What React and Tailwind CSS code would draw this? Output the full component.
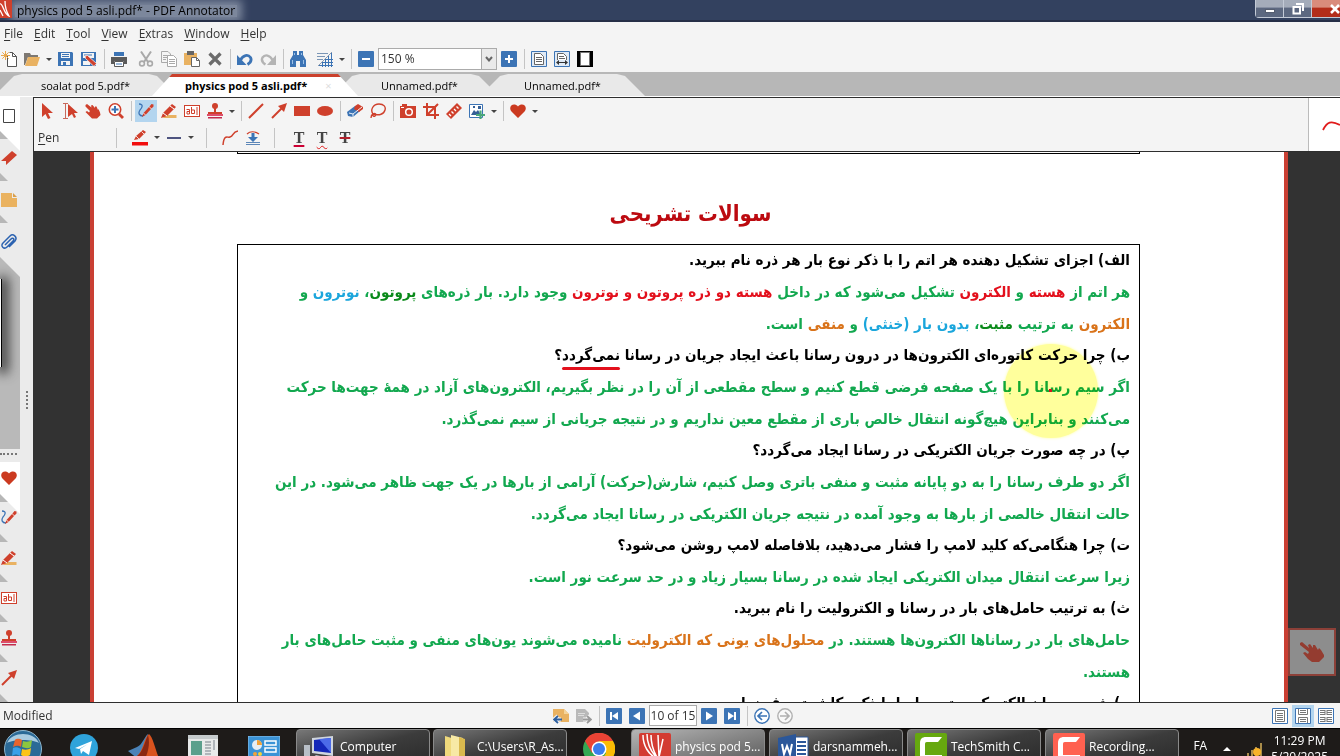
import { useState } from "react";

const RED = "#cf402c";
const BLUE = "#3c74b5";
const GREY = "#a9a9a9";

const icons = {
  newFile: (
    <>
      <path d="M6.5 4V15.5H15.5V5.5L11.5 1.5H8.5M11.5 1.5V5.5H15.5" fill="#fff" stroke="#555" />
      <path d="M4.5 0V9M0 4.5H9M1.3 1.3L7.7 7.7M7.7 1.3L1.3 7.7" stroke="#e9a74b" />
    </>
  ),
  open: (
    <>
      <path d="M0 14V2H6L7 4H14V6H4L1 14Z" fill="#7d7872" />
      <path d="M4 6H16L13 15H1Z" fill="#e9b262" />
    </>
  ),
  save: (
    <>
      <path d="M0 1H14L15 2V15H0Z" fill={BLUE} />
      <path d="M3 2H12V7H3ZM3 10H12V14H3Z" fill="#f4f4f4" />
      <path d="M4 3.5H11M4 5.5H11" stroke={BLUE} />
      <path d="M5 11H8V14H5Z" fill={BLUE} />
    </>
  ),
  saveEdit: (
    <>
      <path d="M0 1H15V15H0Z" fill={BLUE} />
      <path d="M2 2H13V7H2ZM2 10H9V14H2Z" fill="#f4f4f4" />
      <path d="M3 4H11" stroke={BLUE} />
      <path d="M4 5L6.5 4.5L15.5 12.5L13 15.5L4.5 7.5Z" fill={RED} stroke="#fff" strokeWidth=".7" />
    </>
  ),
  print: (
    <>
      <path d="M3 1H13V5H3Z" fill={BLUE} />
      <path d="M0 6H16V13H13V10H3V13H0Z" fill="#5a5a5a" />
      <path d="M3.5 10.5H12.5V15.5H3.5Z" fill="#fff" stroke="#5a5a5a" />
      <path d="M5 13H11" stroke={BLUE} />
    </>
  ),
  cut: (
    <>
      <path d="M3 0.5L10 11M13 0.5L6 11" stroke={GREY} strokeWidth="2" />
      <circle cx="4" cy="12.5" r="2.4" fill="none" stroke={GREY} strokeWidth="1.6" />
      <circle cx="12" cy="12.5" r="2.4" fill="none" stroke={GREY} strokeWidth="1.6" />
    </>
  ),
  copy: (
    <>
      <path d="M.5 .5H7L9.5 3V11.5H.5Z" fill="#f4f4f4" stroke={GREY} />
      <path d="M2 4.5H7M2 6.5H7M2 8.5H5" stroke={GREY} />
      <path d="M6.5 4.5H12.5L15.5 7.5V15.5H6.5Z" fill="#fff" stroke={GREY} />
      <path d="M8 8.5H14M8 10.5H14M8 12.5H14" stroke={GREY} />
    </>
  ),
  paste: (
    <>
      <path d="M0 2H13V14H0Z" fill="#e9b262" />
      <path d="M3 0H10V4H3Z" fill="#666" />
      <path d="M7.5 6.5H12.5L15.5 9.5V15.5H7.5Z" fill="#fff" stroke="#666" />
      <path d="M12.5 6.5V9.5H15.5" fill="none" stroke="#666" />
    </>
  ),
  remove: <path d="M2.5 2.5L13.5 13.5M13.5 2.5L2.5 13.5" stroke="#6b6b6b" strokeWidth="3.2" />,
  undo: (
    <>
      <path d="M3.500 9C6 4 11 3 13.500 6.500C15 9.500 13 12 10.500 13.500" fill="none" stroke={BLUE} strokeWidth="2.800" />
      <path d="M0 4V14H9.500Z" fill={BLUE} />
    </>
  ),
  redo: (
    <>
      <path d="M12.500 9C10 4 5 3 2.500 6.500C1 9.500 3 12 5.500 13.500" fill="none" stroke="#b4b4b4" strokeWidth="2.400" />
      <path d="M16 4V14H7Z" fill="#b4b4b4" />
    </>
  ),
  find: (
    <>
      <path d="M3 0H7V4H9V0H13V4L16 9V16H10V10H6V16H0V9L3 4Z" fill={BLUE} />
      <path d="M4.500 2V4M11.500 2V4M2.500 9V13M13.500 9V13" stroke="#9cc0e6" />
    </>
  ),
  grid: (
    <>
      <path d="M0 2.500H11M0 5.500H8M0 8.500H6" stroke="#7a95b5" />
      <path d="M1 15L15 1" stroke="#8b9bb0" />
      <path d="M2 14.500H16M5 11.500H16M8 8.500H16M5.500 11V16M8.500 8V16M11.500 5V16M14.500 2V16" stroke={BLUE} />
    </>
  ),
  minus: (
    <>
      <rect width="16" height="16" rx="1" fill={BLUE} />
      <path d="M4 8H12" stroke="#fff" strokeWidth="2" />
    </>
  ),
  plus: (
    <>
      <rect width="16" height="16" rx="1" fill={BLUE} />
      <path d="M4 8H12M8 4V12" stroke="#fff" strokeWidth="2" />
    </>
  ),
  fitPage: (
    <>
      <path d="M.5 .5H15.500V15.500H.5Z" fill="#dfeaf6" stroke={BLUE} />
      <path d="M3.500 2.500H9.500L12.500 5.500V13.500H3.500Z" fill="#fff" stroke="#666" />
      <path d="M5 6.500H11M5 8.500H11M5 10.500H11" stroke="#666" />
    </>
  ),
  fitWidth: (
    <>
      <path d="M.5 .5H15.500V15.500H.5Z" fill="#dfeaf6" stroke={BLUE} />
      <path d="M3.500 9V2.500H9.500L12.500 5.500V9" fill="#fff" stroke="#666" />
      <path d="M5 5.500H10M5 7.500H11" stroke="#666" />
      <path d="M2 11.500L5 9V14ZM14 11.500L11 9V14Z" fill="#333" />
      <path d="M4 11.500H12" stroke="#333" />
    </>
  ),
  fullscreen: (
    <>
      <path d="M0 0H16V16H0Z" fill="#000" />
      <path d="M3.500 1.500H12.500V14.500H3.500Z" fill="#fff" stroke="#777" />
    </>
  ),
  select: <path d="M3 0L14 10H9L11.500 15L9 16L6.500 11L3 14Z" fill={RED} />,
  selectText: (
    <>
      <path d="M1 .5H6M1 15.500H6M3.500 .5V15.500" stroke="#c7685a" />
      <path d="M6 1L16 10H12L14 14L12 15L10 11L6 14Z" fill={RED} />
    </>
  ),
  hand: (
    <path
      d="M.5 2L2 1L6.500 4.500L6 2.500L7.500 2L10 5L10 3.500L11.500 3.500L13 7L13.500 6L15 9.500L15.500 12L12 15.500H7L3.500 12L.5 9L2 8L4 9.500L5 8L.5 3.500Z"
      fill={RED}
    />
  ),
  zoom: (
    <>
      <circle cx="7" cy="6.500" r="5.700" fill="#fff" stroke={RED} strokeWidth="1.600" />
      <path d="M11 11L15 15" stroke={RED} strokeWidth="2.800" />
      <path d="M3.500 6.500H10.500M7 3V10" stroke={BLUE} strokeWidth="2" />
    </>
  ),
  pen: (
    <>
      <path d="M1 1C6 1 4 5 2 7C0 10 1 13 5 13" fill="none" stroke={BLUE} strokeWidth="1.300" />
      <path d="M4 14L5.500 10L11.500 3.500L13.500 1L15.500 1.500L15.500 3.500L13.500 5.500L7.500 12Z" fill={RED} />
      <path d="M11 3.500L13.500 6M5.500 10L7.500 12" stroke="#fff" strokeWidth=".8" />
    </>
  ),
  marker: (
    <>
      <path d="M4 12H15.500V15H2Z" fill="#e9b262" />
      <path d="M0 15L2 10L11 1L15 4L6 13Z" fill={RED} />
      <path d="M9 3L13 6M2 10L6 13" stroke="#fff" />
    </>
  ),
  textBox: (
    <>
      <rect x=".5" y="2.500" width="15" height="11" fill="#fff" stroke={RED} />
      <path d="M2.500 6.500H5.500V11M5.500 8.500H3V11H5.500M7.500 4V10.500H10.500V7H7.500M13 4V12" fill="none" stroke={RED} />
    </>
  ),
  stamp: (
    <>
      <circle cx="8" cy="3" r="3" fill={RED} />
      <path d="M7 5H9V9H15V11H1V9H7Z" fill={RED} />
      <path d="M0 11H16V13H0Z" fill="#dd4d6a" />
      <path d="M1 14H15V15.500H1Z" fill="#c22c4c" />
    </>
  ),
  line: <path d="M1 15L15 1" stroke={RED} strokeWidth="2" />,
  arrow: (
    <>
      <path d="M1 15L11 5" stroke={RED} strokeWidth="2" />
      <path d="M16 0L13 9L7 3Z" fill={RED} />
    </>
  ),
  rect: <path d="M0 3H16V13H0Z" fill={RED} />,
  ellipse: <ellipse cx="8" cy="8" rx="8" ry="5" fill={RED} />,
  eraser: (
    <>
      <path d="M0 9L8 3L13 8L6 14L1 13Z" fill={BLUE} />
      <path d="M8 3L11 1L16 4V6L12 9L7 6Z" fill={RED} />
      <path d="M2 10L6 11L15 4M6 11V14" fill="none" stroke="#fff" strokeWidth=".9" />
    </>
  ),
  lasso: (
    <path
      d="M3 11C0 7 3 1 9 1C14 1 16 4 15 7C14 11 9 13 4 11C2 12 3 14 5 13C7 11 5 10 3 11C1 12 1 14 1 15"
      fill="none"
      stroke={RED}
      strokeWidth="1.400"
    />
  ),
  camera: (
    <>
      <path d="M0 3H2V1H7V3H16V15H0Z" fill={RED} />
      <circle cx="9" cy="9" r="3.300" fill="none" stroke="#fff" strokeWidth="1.500" />
      <path d="M1 4.500H4" stroke="#fff" />
    </>
  ),
  crop: <path d="M4 0V12H16M0 4H12V16M4 12L15 1" fill="none" stroke={RED} strokeWidth="2" />,
  ruler: (
    <>
      <path d="M0 11L11 0L16 5L5 16Z" fill={RED} />
      <path d="M3 11L5 13M5.500 8.500L7.500 10.500M8 6L10 8M10.500 3.500L12.500 5.500" stroke="#fff" strokeWidth="1.300" />
    </>
  ),
  addImage: (
    <>
      <path d="M.5 1.500H13.500V14.500H.5Z" fill="#fff" stroke={BLUE} />
      <path d="M2 12L5 7L7 9L9 7L12 12ZM4 3H6V5H4ZM9 3H12V6H9Z" fill="#355f96" />
      <path d="M7 12H16M11.500 7.500V16" stroke="#49a678" strokeWidth="2.200" />
    </>
  ),
  heart: <path d="M8 15L1 8C-2 3 4 -1 8 3.500C12 -1 18 3 15 8Z" fill="#cb3a20" />,
  penColor: (
    <>
      <path d="M2 10L4 6L11 0L14 2L7 9Z" fill={RED} />
      <path d="M9.500 1.500L12 4M4 6L7 9" stroke="#fff" strokeWidth=".8" />
      <path d="M0 12H16V15.500H0Z" fill="#f20d0d" />
    </>
  ),
  penWidth: <path d="M1 8H15" stroke="#4e5480" strokeWidth="2" />,
  curve: <path d="M1 15C2 4 5 8 8 7C12 6 10 2 16 1" fill="none" stroke={RED} strokeWidth="1.500" />,
  pressure: (
    <>
      <path d="M2 4C5 1 10 1 14 4" fill="none" stroke={RED} strokeWidth="1.200" />
      <path d="M6.500 3H9.500V7H13L8 12L3 7H6.500Z" fill={BLUE} />
      <path d="M1 12.500H15M1 14.500H15" stroke="#5d87b8" />
    </>
  ),
  page: <path d="M2.500 1.500H13.500V14.500H2.500Z" fill="#fff" stroke="#444" />,
  bookmark: <path d="M0 11L11 1L16 5L5 15V11Z" fill={RED} />,
  note: (
    <>
      <path d="M0 1H11V6H16V15H0Z" fill="#eab25f" />
      <path d="M12 1L16 5H12Z" fill="#d99f4c" />
    </>
  ),
  clip: (
    <path
      d="M4 11L10 5C12 3 14 5 12 7L6 13C3 16 -1 12 2 9L9 2C12 -1 17 3 14 7L8 13"
      fill="none"
      stroke="#2b62b0"
      strokeWidth="1.500"
    />
  ),
  noteBack: (
    <>
      <path d="M0 1H11L16 6V14H0Z" fill="#e9b262" />
      <path d="M11 1L16 6H11Z" fill="#f4d39b" />
      <path d="M8 11.500H1M5 8L1 11.500L5 15" fill="none" stroke="#f4f4f4" strokeWidth="4" />
      <path d="M9 11.500H1M5 8L1 11.500L5 15" fill="none" stroke="#2d5f9f" strokeWidth="1.800" />
    </>
  ),
  noteNext: (
    <>
      <path d="M0 1H9L13 5V14H0Z" fill="#b9b9b9" />
      <path d="M2 5.500H9M2 7.500H8" stroke="#ddd" />
      <path d="M7 11.500H15M11 8L15 11.500L11 15" fill="none" stroke="#f4f4f4" strokeWidth="4" />
      <path d="M7 11.500H15M11 8L15 11.500L11 15" fill="none" stroke="#999" strokeWidth="1.800" />
    </>
  ),
  first: (
    <>
      <rect width="16" height="16" rx="1" fill={BLUE} />
      <path d="M4 4H6V12H4ZM12 4V12L6 8Z" fill="#fff" />
    </>
  ),
  prev: (
    <>
      <rect width="16" height="16" rx="1" fill={BLUE} />
      <path d="M11 3.500V12.500L4 8Z" fill="#fff" />
    </>
  ),
  next: (
    <>
      <rect width="16" height="16" rx="1" fill={BLUE} />
      <path d="M5 3.500V12.500L12 8Z" fill="#fff" />
    </>
  ),
  last: (
    <>
      <rect width="16" height="16" rx="1" fill={BLUE} />
      <path d="M10 4H12V12H10ZM4 4V12L10 8Z" fill="#fff" />
    </>
  ),
  back: (
    <>
      <circle cx="8" cy="8" r="7.200" fill="#fff" stroke={BLUE} strokeWidth="1.400" />
      <path d="M13 8H4M8 4L4 8L8 12" fill="none" stroke={BLUE} strokeWidth="1.700" />
    </>
  ),
  forward: (
    <>
      <circle cx="8" cy="8" r="7.200" fill="#f8f8f8" stroke="#b0b0b0" strokeWidth="1.400" />
      <path d="M3 8H12M8 4L12 8L8 12" fill="none" stroke="#b0b0b0" strokeWidth="1.700" />
    </>
  ),
  viewSingle: (
    <>
      <path d="M.5 .5H15.500V15.500H.5Z" fill="#fff" stroke={BLUE} />
      <path d="M3.500 2.500H12.500V13.500H3.500ZM5 5.500H11M5 7.500H11M5 9.500H11M5 11.500H11" fill="none" stroke="#777" />
    </>
  ),
  viewContinuous: (
    <>
      <path d="M.5 .5H15.500V15.500H.5Z" fill="#fff" stroke={BLUE} />
      <path d="M3.500 1V6.500H12.500V1M3.500 15V9.500H12.500V15M5 2.500H11M5 4.500H11M5 11.500H11M5 13.500H11" fill="none" stroke="#777" />
    </>
  ),
  viewDouble: (
    <>
      <path d="M.5 .5H15.500V15.500H.5Z" fill="#fff" stroke={BLUE} />
      <path d="M2 2.500H7M2 4.500H7M2 6.500H7M9 2.500H14M9 4.500H14M9 6.500H14M2 9.500H7M2 11.500H7M2 13.500H7M9 9.500H14M9 11.500H14M9 13.500H14M7 2V7M9 2V7M7 9V14M9 9V14" stroke="#777" />
    </>
  ),
};

function Icon({ name }) {
  return (
    <svg viewBox="0 0 16 16" className="w-4 h-4 shrink-0" aria-hidden="true">
      {icons[name]}
    </svg>
  );
}

function Tool({ name, label, className = "" }) {
  return (
    <button type="button" aria-label={label || name} className={`w-4 h-4 shrink-0 ${className}`}>
      <Icon name={name} />
    </button>
  );
}

function Caret() {
  return <span className="-mx-px shrink-0 border-x-[3px] border-t-[3px] border-x-transparent border-t-[#444]" />;
}

function Sep() {
  return <span className="w-px h-5 -mr-px shrink-0 bg-[#c4c4c4]" />;
}

function TitleBar() {
  return (
    <header className="flex items-start h-[22px] shrink-0 bg-[#33415f] border-b-2 border-[#262f47] overflow-hidden">
      <svg viewBox="0 0 12 18" className="relative z-10 w-3 h-[18px] shrink-0">
        <path d="M0 0H12V18H0Z" fill={RED} />
        <path d="M0 4C3 3 4 15 9 16C6 11 5 5 5 1M0 10L3 16" fill="none" stroke="#fff" strokeWidth="1.300" />
      </svg>
      <h1 className="ml-[3px] mt-[5px] px-[2px] h-3 bg-[#7c879c] text-xs leading-3 text-black shadow-[0_0_8px_5px_#7c879c] whitespace-nowrap">
        physics pod 5 asli.pdf* - PDF Annotator
      </h1>
      <div className="ml-auto flex h-[18px] border-l border-b border-[#c3cad6] rounded-bl">
        <button type="button" aria-label="Minimize" className="w-7 flex justify-center items-center bg-linear-to-b from-[#a4acba] from-40% to-[#5c6880] to-50% border-r border-[#c3cad6]">
          <span className="w-[10px] h-[4px] mt-1 bg-white border border-[#555e70]" />
        </button>
        <button type="button" aria-label="Restore" className="w-7 flex justify-center items-center bg-linear-to-b from-[#a4acba] from-40% to-[#5c6880] to-50% border-r border-[#c3cad6]">
          <svg viewBox="0 0 12 12" className="w-3 h-3">
            <path d="M4 1H11V8M1.500 4H8V10.500H1.500Z" fill="none" stroke="#fff" strokeWidth="2" />
          </svg>
        </button>
        <button type="button" aria-label="Close" className="w-7 flex justify-end items-center bg-linear-to-b from-[#d98c7c] from-40% to-[#b32d1a] to-50%">
          <svg viewBox="0 0 10 10" className="w-[10px] h-[10px]">
            <path d="M1 1L9 9M9 1L1 9" stroke="#fff" strokeWidth="2.500" />
          </svg>
        </button>
      </div>
    </header>
  );
}

const menus = ["File", "Edit", "Tool", "View", "Extras", "Window", "Help"];

function MenuBar() {
  return (
    <nav className="flex items-center gap-[11px] h-6 px-1 shrink-0 bg-[#f4f4f4] text-xs text-[#333]">
      {menus.map((m) => (
        <button key={m} type="button">
          <span className="underline underline-offset-2">{m[0]}</span>
          {m.slice(1)}
        </button>
      ))}
    </nav>
  );
}

function MainToolbar() {
  const [zoom, setZoom] = useState("150 %");
  return (
    <div className="flex items-center gap-[7px] h-[26px] pl-px shrink-0 bg-[#f4f4f4]">
      <Tool name="newFile" />
      <Tool name="open" />
      <Caret />
      <Tool name="save" />
      <Tool name="saveEdit" />
      <Sep />
      <Tool name="print" />
      <Tool name="cut" className="ml-1" />
      <Tool name="copy" />
      <Tool name="paste" />
      <Tool name="remove" />
      <Sep />
      <Tool name="undo" />
      <Tool name="redo" />
      <Sep />
      <Tool name="find" />
      <Tool name="grid" className="ml-1" />
      <Caret />
      <Sep />
      <Tool name="minus" />
      <div className="flex w-[119px] h-[22px] -mx-[3px] shrink-0 border border-[#ababab] bg-white">
        <input
          aria-label="Zoom"
          value={zoom}
          onChange={(e) => setZoom(e.target.value)}
          className="w-[102px] px-[2px] text-xs text-[#333] outline-none"
        />
        <button type="button" aria-label="Zoom levels" className="flex-1 flex items-center justify-center bg-[#eaeaea] border-l border-[#ababab]">
          <svg viewBox="0 0 8 6" className="w-2 h-[6px]">
            <path d="M1 1L4 4.500L7 1" fill="none" stroke="#666" strokeWidth="2" />
          </svg>
        </button>
      </div>
      <Tool name="plus" />
      <Sep />
      <Tool name="fitPage" />
      <Tool name="fitWidth" />
      <Tool name="fullscreen" />
    </div>
  );
}

const tabShape = "flex items-center justify-center shrink-0 h-[22px] text-[11px] leading-4 text-black";

function TabStrip() {
  return (
    <div className="shrink-0 bg-[#b7b7b7] pt-[2px] border-b border-white">
      <div className="flex items-end">
        <button type="button" className={`${tabShape} w-[183px] -ml-[6px] pt-[2px] bg-[#e9e9e9] [clip-path:polygon(0_100%,20px_2px,28px_0,calc(100%-28px)_0,calc(100%-20px)_2px,100%_100%)]`}>
          soalat pod 5.pdf*
        </button>
        <div className={`${tabShape} relative z-10 w-[206px] -ml-[25px] pl-[33px] pb-[2px] justify-start bg-white border-t-[3px] border-[#cb402c] [clip-path:polygon(0_100%,20px_0,calc(100%-20px)_0,100%_100%)]`}>
          <button type="button" className="font-bold">
            physics pod 5 asli.pdf*
          </button>
          <button type="button" aria-label="Close tab" className="ml-[18px] text-[#ddd]">
            ×
          </button>
        </div>
        <button type="button" className={`${tabShape} w-[167px] -ml-[26px] pl-2 pt-[2px] bg-[#e9e9e9] [clip-path:polygon(0_100%,20px_2px,28px_0,calc(100%-28px)_0,calc(100%-20px)_2px,100%_100%)]`}>
          Unnamed.pdf*
        </button>
        <button type="button" className={`${tabShape} w-[165px] -ml-[19px] pt-[2px] bg-[#e9e9e9] [clip-path:polygon(0_100%,20px_2px,28px_0,calc(100%-28px)_0,calc(100%-20px)_2px,100%_100%)]`}>
          Unnamed.pdf*
        </button>
      </div>
    </div>
  );
}

function Corner() {
  return <span className="absolute left-0 bottom-0 w-2 h-2 bg-[#b7b7b7] [clip-path:polygon(0_0,100%_100%,0_100%)]" />;
}

function SideBar() {
  return (
    <aside className="flex w-[33px] shrink-0 bg-[#ebebeb]">
      <div className="flex flex-col w-5">
        <button type="button" aria-label="Pages" className="relative h-[42px] pl-px pb-1 flex items-center bg-white">
          <Icon name="page" />
          <Corner />
        </button>
        <button type="button" aria-label="Bookmarks" className="relative h-[42px] pl-px pb-1 flex items-center">
          <span className="absolute top-0 right-0 w-3 h-3 bg-white [clip-path:polygon(0_0,100%_0,100%_100%)]" />
          <Icon name="bookmark" />
          <Corner />
        </button>
        <button type="button" aria-label="Notes" className="relative h-[42px] pl-px pb-1 flex items-center">
          <Icon name="note" />
          <Corner />
        </button>
        <button type="button" aria-label="Attachments" className="h-[34px] pl-px pt-1 flex items-center">
          <Icon name="clip" />
        </button>
        <div className="flex-1 flex items-start pt-[22px] bg-[#b9b9b9] [clip-path:polygon(0_0,100%_20px,100%_100%,0_100%)]">
          <span className="w-[2px] h-[88px] bg-white border-r border-black shadow-[2px_2px_12px_4px_#333]" />
        </div>
        <div className="h-[13px] pt-1">
          <div className="w-[17px] border-t-2 border-dotted border-[#777]" />
        </div>
        <button type="button" aria-label="Favorites" className="relative h-10 pl-px pb-2 flex items-center bg-white">
          <Icon name="heart" />
          <Corner />
        </button>
        {["pen", "marker", "textBox", "stamp", "arrow"].map((name, i) => (
          <button key={name} type="button" aria-label={`Favorite ${name}`} className="relative h-10 pl-px pb-2 flex items-center">
            {i === 0 && <span className="absolute top-0 right-0 w-3 h-3 bg-white [clip-path:polygon(0_0,100%_0,100%_100%)]" />}
            <Icon name={name} />
            <Corner />
          </button>
        ))}
      </div>
      <div className="flex-1 flex items-center justify-center">
        <div className="h-[18px] border-l-2 border-dotted border-[#777]" />
      </div>
    </aside>
  );
}

const textMark = "w-4 font-['Liberation_Serif',serif] font-bold text-base leading-[14px] text-[#444] underline-offset-2";

function PenToolbar() {
  return (
    <div className="flex h-[55px] shrink-0 bg-[#f4f4f4] border-y border-l border-[#2e2e2e]">
      <div className="flex-1">
        <div className="flex items-center gap-[7px] h-[26px] pl-[5px]">
          <Tool name="select" />
          <Tool name="selectText" />
          <Tool name="hand" />
          <Tool name="zoom" />
          <Sep />
          <button type="button" aria-label="Pen" aria-pressed="true" className="flex items-center justify-center shrink-0 w-[22px] h-[22px] -mx-[3px] bg-[#b3d5ef]">
            <Icon name="pen" />
          </button>
          <Tool name="marker" />
          <Tool name="textBox" />
          <Tool name="stamp" />
          <Caret />
          <Sep />
          <Tool name="line" />
          <Tool name="arrow" />
          <Tool name="rect" />
          <Tool name="ellipse" />
          <Sep />
          <Tool name="eraser" />
          <Tool name="lasso" />
          <Sep />
          <Tool name="camera" />
          <Tool name="crop" />
          <Tool name="ruler" />
          <Tool name="addImage" />
          <Caret />
          <Sep />
          <Tool name="heart" />
          <Caret />
        </div>
        <div className="flex items-center gap-[7px] h-[27px] pl-1">
          <span className="w-[71px] text-xs text-[#333]">
            <span className="underline underline-offset-2">P</span>en
          </span>
          <Sep />
          <Tool name="penColor" label="Pen color" className="ml-[9px]" />
          <Caret />
          <Tool name="penWidth" label="Pen width" />
          <Caret />
          <span className="ml-[6px] w-px h-5 bg-[#c4c4c4]" />
          <Tool name="curve" className="ml-2" />
          <Tool name="pressure" />
          <span className="ml-[6px] w-px h-5 bg-[#c4c4c4]" />
          <button type="button" aria-label="Underline" className={`${textMark} ml-[9px] underline decoration-[#c03] decoration-2`}>
            T
          </button>
          <button type="button" aria-label="Squiggly underline" className={`${textMark} underline decoration-wavy decoration-[#e01b1b] decoration-1`}>
            T
          </button>
          <button type="button" aria-label="Strikethrough" className={`${textMark} line-through decoration-[#b3202c] decoration-2`}>
            T
          </button>
        </div>
      </div>
      <div className="flex items-center justify-end w-8 bg-white border-l border-[#bbb]">
        <svg viewBox="0 0 18 12" className="w-[18px] h-3">
          <path d="M1 11C5 3 9 1 18 6" fill="none" stroke="#e01b1b" strokeWidth="1.800" />
        </svg>
      </div>
    </div>
  );
}

function Question({ children }) {
  return <p className="h-[31px] leading-[31px] text-black whitespace-nowrap">{children}</p>;
}

function Answer({ children }) {
  return <p className="h-8 leading-8 text-[#12a84f] whitespace-nowrap">{children}</p>;
}

function Red({ children }) {
  return <span className="text-[#e3101c]">{children}</span>;
}

function Orange({ children }) {
  return <span className="text-[#d9731a]">{children}</span>;
}

function Sky({ children }) {
  return <span className="text-[#1ba6dc]">{children}</span>;
}

function Document() {
  return (
    <main className="relative flex-1 min-h-0 overflow-hidden bg-[#323232] pl-[57px] pr-[52px]">
      <article dir="rtl" lang="fa" className="bg-white border-x-4 border-[#c93f33] pl-[143px] pr-[144px] font-['DejaVu_Sans_Condensed','DejaVu_Sans',sans-serif] font-bold">
        <div className="h-[2px] border-x border-b border-black" />
        <h2 className="h-[90px] pt-11 pl-1 text-center text-[22px] leading-8 text-[#bc0a10]">سوالات تشریحی</h2>
        <section className="relative border border-black px-[9px] text-[15px]">
          <Question>الف) اجزای تشکیل دهنده هر اتم را با ذکر نوع بار هر ذره نام ببرید.</Question>
          <Answer>
            هر اتم از <Red>هسته</Red> و <Red>الکترون</Red> تشکیل می‌شود که در داخل <Red>هسته دو ذره پروتون و نوترون</Red> وجود دارد. بار ذره‌های{" "}
            <span className="text-[#0a8a1a]">پروتون</span>، <Sky>نوترون</Sky> و
          </Answer>
          <Answer>
            <Orange>الکترون</Orange> به ترتیب <span className="text-[#0a8a1a]">مثبت</span>، <Sky>بدون بار (خنثی)</Sky> و <Orange>منفی</Orange> است.
          </Answer>
          <Question>
            ب) چرا حرکت کاتوره‌ای الکترون‌ها در درون رسانا باعث ایجاد جریان در رسانا{" "}
            <span className="relative">
              نمی‌گردد
              <span className="absolute inset-x-0 -bottom-[6px] h-[3px] rounded-full bg-[#e3101c]" />
            </span>
            ؟
          </Question>
          <Answer>اگر سیم رسانا را با یک صفحه فرضی قطع کنیم و سطح مقطعی از آن را در نظر بگیریم، الکترون‌های آزاد در همهٔ جهت‌ها حرکت</Answer>
          <Answer>می‌کنند و بنابراین هیچ‌گونه انتقال خالص باری از مقطع معین نداریم و در نتیجه جریانی از سیم نمی‌گذرد.</Answer>
          <Question>پ) در چه صورت جریان الکتریکی در رسانا ایجاد می‌گردد؟</Question>
          <Answer>اگر دو طرف رسانا را به دو پایانه مثبت و منفی باتری وصل کنیم، شارش(حرکت) آرامی از بارها در یک جهت ظاهر می‌شود. در این</Answer>
          <Answer>حالت انتقال خالصی از بارها به وجود آمده در نتیجه جریان الکتریکی در رسانا ایجاد می‌گردد.</Answer>
          <Question>ت) چرا هنگامی‌که کلید لامپ را فشار می‌دهید، بلافاصله لامپ روشن می‌شود؟</Question>
          <Answer>زیرا سرعت انتقال میدان الکتریکی ایجاد شده در رسانا بسیار زیاد و در حد سرعت نور است.</Answer>
          <Question>ث) به ترتیب حامل‌های بار در رسانا و الکترولیت را نام ببرید.</Question>
          <Answer>
            حامل‌های بار در رساناها الکترون‌ها هستند. در <Orange>محلول‌های یونی که الکترولیت</Orange> نامیده می‌شوند یون‌های منفی و مثبت حامل‌های بار
          </Answer>
          <Answer>هستند.</Answer>
          <Question>ج) شدت جریان الکتریکی متوسط را با ذکر یکاش تعریف نمایید.</Question>
          <span className="absolute top-[99px] right-[41px] w-[94px] h-[94px] rounded-full bg-[#ffff9c] mix-blend-multiply shadow-[0_0_3px_#ffff9c]" />
          <span className="absolute top-[144px] right-[87px] w-[3px] h-[3px] bg-[#d8101c]" />
        </section>
      </article>
      <button type="button" aria-label="Pan" className="absolute right-1 bottom-[26px] w-12 h-12 flex items-center justify-center bg-[#8d8d8d] border-2 border-[#8c4038]">
        <svg viewBox="0 0 24 20" className="w-6 h-5">
          <path
            d="M0 1L2 0L9 6L8 3L10 2L13 6L13 3L15 3L18 8L19 6L21 8L24 13V15L19 20H12L8 17L3 11L5 10L8 12L9 10L0 3Z"
            fill="#943c30"
          />
        </svg>
      </button>
    </main>
  );
}

function StatusBar() {
  return (
    <div className="grid grid-cols-[1fr_auto_1fr] items-center h-[26px] shrink-0 bg-[#f4f4f4] border-t border-[#2e2e2e] text-xs text-[#333]">
      <div className="pl-[3px]">Modified</div>
      <div className="flex items-center gap-[7px] pl-[6px]">
        <Tool name="noteBack" />
        <Tool name="noteNext" />
        <Sep />
        <Tool name="first" />
        <Tool name="prev" />
        <input aria-label="Page" defaultValue="10 of 15" className="w-12 h-[21px] -mx-[3px] bg-white border border-[#ababab] text-center outline-none" />
        <Tool name="next" />
        <Tool name="last" />
        <Sep />
        <Tool name="back" />
        <Tool name="forward" />
      </div>
      <div className="flex items-center justify-end gap-[7px] pr-[6px]">
        <Tool name="viewSingle" />
        <button type="button" aria-label="Continuous view" aria-pressed="true" className="flex items-center justify-center w-[22px] h-[22px] -mx-[3px] bg-[#b3d5ef]">
          <Icon name="viewContinuous" />
        </button>
        <Tool name="viewDouble" />
      </div>
    </div>
  );
}

function TaskButton({ label, active, children }) {
  return (
    <button
      type="button"
      className={`flex items-center gap-1 w-[134px] h-9 pl-[7px] shrink-0 border border-[#8a8a8a] rounded-sm text-white text-xs leading-4 whitespace-nowrap ${
        active ? "bg-linear-to-br from-[#b5b5b5] to-[#5a5a5a]" : "bg-linear-to-br from-[#787878] via-[#3c3c3c] to-[#2a2a2a]"
      }`}
    >
      <svg viewBox="0 0 32 32" className="w-8 h-8 mt-1 shrink-0">
        {children}
      </svg>
      {label}
    </button>
  );
}

function Camtasia({ color }) {
  return (
    <>
      <rect width="32" height="32" rx="2" fill={color} />
      <path d="M27 4L23 9H12C10 9 10 10 10 12V22H27V27H5V10C5 6 7 4 11 4Z" fill="#fff" />
    </>
  );
}

function TaskBar() {
  return (
    <footer className="flex items-start h-7 shrink-0 overflow-hidden bg-[#1e1b19] border-t border-black">
      <button type="button" aria-label="Start" className="ml-1 mt-px w-[38px] shrink-0">
        <svg viewBox="0 0 38 38" className="w-[38px] h-[38px]">
          <circle cx="19" cy="19" r="18.500" fill="#2b6a97" stroke="#8fb8d0" />
          <path d="M3 13C8 1 30 1 35 13C28 9 10 9 3 13Z" fill="#a9cbe0" />
          <path d="M11 10C13 8 16 9 18 10L17 17C14 15 12 16 9 17Z" fill="#e8642c" />
          <path d="M19 11C22 12 25 12 28 10L27 17C24 19 21 18 18 17Z" fill="#8cc63f" />
          <path d="M9 18C11 17 14 17 17 19L16 26C13 24 11 24 8 26Z" fill="#3aa0e8" />
          <path d="M18 19C21 20 24 20 27 18L26 25C23 27 20 27 17 25Z" fill="#fcc419" />
        </svg>
      </button>
      <button type="button" aria-label="Telegram" className="ml-7 mt-[5px] w-7 shrink-0">
        <svg viewBox="0 0 28 28" className="w-7 h-7">
          <circle cx="14" cy="14" r="14" fill="#2fa3da" />
          <path d="M5 14L22 7L19 21L13 17L11 20L10 15L18 10L9 15Z" fill="#fff" />
        </svg>
      </button>
      <button type="button" aria-label="Matlab" className="ml-[30px] mt-[5px] w-8 shrink-0">
        <svg viewBox="0 0 32 32" className="w-8 h-8">
          <path d="M0 17L9 13C15 10 16 3 20 0C19 10 18 20 10 25Z" fill="#4b83b8" />
          <path d="M9 22C15 18 16 3 21 0C25 3 28 18 31 24C25 18 19 27 15 30C14 26 12 23 9 22Z" fill="#d9531e" />
          <path d="M20 1C22 8 21 17 16 27C13 26 12 22 9 22C15 18 17 7 20 1Z" fill="#8a2712" />
        </svg>
      </button>
      <button type="button" aria-label="Viewer" className="ml-7 mt-[6px] w-[30px] shrink-0">
        <svg viewBox="0 0 30 28" className="w-[30px] h-7">
          <path d="M0 0H30V28H0Z" fill="#e8eaea" />
          <path d="M0 0H30V4H0Z" fill="#c6cbcc" />
          <path d="M3 6H14V20H3Z" fill="#5b9f8c" />
          <path d="M17 7H23M17 10H23M17 13H23M17 16H23M17 19H23M26 5V15" stroke="#79818a" />
        </svg>
      </button>
      <button type="button" aria-label="Control Panel" className="ml-[30px] mt-[7px] w-8 shrink-0">
        <svg viewBox="0 0 32 28" className="w-8 h-7">
          <path d="M0 0H32V28H0Z" fill="#3b93d6" stroke="#8bc2ea" />
          <circle cx="9" cy="9" r="5" fill="#e7eef4" />
          <path d="M9 9V4A5 5 0 0 1 14 9Z" fill="#f2a33a" />
          <path d="M17 5H28V9H17ZM17 12H28V16H17Z" fill="none" stroke="#fff" strokeWidth="1.500" />
          <circle cx="7" cy="18" r="2" fill="#f2a33a" />
          <circle cx="12" cy="18" r="2" fill="#f2d33a" />
        </svg>
      </button>
      <div className="flex gap-[3px] ml-4">
        <TaskButton label="Computer">
          <path d="M8 5L29 3V23L8 20Z" fill="#cfd5de" />
          <path d="M10 7L27 5V20L10 18Z" fill="#1427b8" />
          <path d="M15 6L27 5V20Z" fill="#4c6be8" />
          <path d="M0 12H6V27H0ZM12 22L26 25L20 28L8 25Z" fill="#b8bfc7" />
        </TaskButton>
        <TaskButton label="C:\Users\R_As...">
          <path d="M4 3L14 6V32H4Z" fill="#efd97c" />
          <path d="M10 2L22 5V30L10 32Z" fill="#f7e9a5" />
          <path d="M18 4L24 6V30L18 32Z" fill="#d9b94e" />
        </TaskButton>
      </div>
      <button type="button" aria-label="Chrome" className="ml-4 mt-1 w-8 shrink-0">
        <svg viewBox="0 0 32 32" className="w-8 h-8">
          <circle cx="16" cy="16" r="16" fill="#34a853" />
          <path d="M2 8A16 16 0 0 1 30 8H16L9 20Z" fill="#ea4335" />
          <path d="M30 8A16 16 0 0 1 16 32L23 20L16 8Z" fill="#fbbc05" />
          <circle cx="16" cy="16" r="7.500" fill="#fff" />
          <circle cx="16" cy="16" r="6" fill="#3b7ded" />
        </svg>
      </button>
      <div className="flex gap-1 ml-4">
        <TaskButton active label="physics pod 5...">
          <rect width="32" height="32" rx="2" fill="#d33c32" />
          <path d="M4 2C4 12 9 22 19 26C14 18 12 10 12 2M8 1C8 12 13 20 19 26M19 2L20 24M24 6L20 24" fill="none" stroke="#fff" strokeWidth="1.500" />
        </TaskButton>
        <TaskButton label="darsnammeh...">
          <path d="M16 4H31V30H16Z" fill="#fff" stroke="#2b579a" />
          <path d="M20 9H29M20 13H29M20 17H29M20 21H29" stroke="#2b579a" strokeWidth="2" />
          <path d="M1 5L19 1V32L1 29Z" fill="#2b579a" />
          <path d="M5 11L7 21L10 13L13 21L15 11" fill="none" stroke="#fff" strokeWidth="2" />
        </TaskButton>
        <TaskButton label="TechSmith C...">
          <Camtasia color="#66a80f" />
        </TaskButton>
        <TaskButton label="Recording...">
          <Camtasia color="#ff6150" />
        </TaskButton>
      </div>
      <div className="flex items-start ml-auto mr-3 text-xs text-white">
        <span className="pt-[9px] leading-4">FA</span>
        <span className="ml-4 mt-[18px] border-x-4 border-b-4 border-x-transparent border-b-white" />
        <svg viewBox="0 0 16 14" className="w-4 h-[14px] ml-4 mt-[14px]">
          <path d="M0 10H2V14H0ZM4 7H6V14H4ZM8 4H10V14H8ZM13 0H15V14H13Z" fill="#a98c4a" />
          <circle cx="10" cy="9" r="4" fill="#f7b32b" />
        </svg>
        <time className="ml-2 pt-1 text-center leading-4 whitespace-nowrap">
          11:29 PM
          <br />
          5/20/2025
        </time>
      </div>
    </footer>
  );
}

export default function App() {
  return (
    <div className="flex flex-col h-screen overflow-hidden bg-[#f4f4f4] font-['Open_Sans',sans-serif]">
      <TitleBar />
      <MenuBar />
      <MainToolbar />
      <TabStrip />
      <div className="flex flex-1 min-h-0">
        <SideBar />
        <div className="flex flex-col flex-1 min-w-0">
          <PenToolbar />
          <Document />
        </div>
      </div>
      <StatusBar />
      <TaskBar />
    </div>
  );
}
